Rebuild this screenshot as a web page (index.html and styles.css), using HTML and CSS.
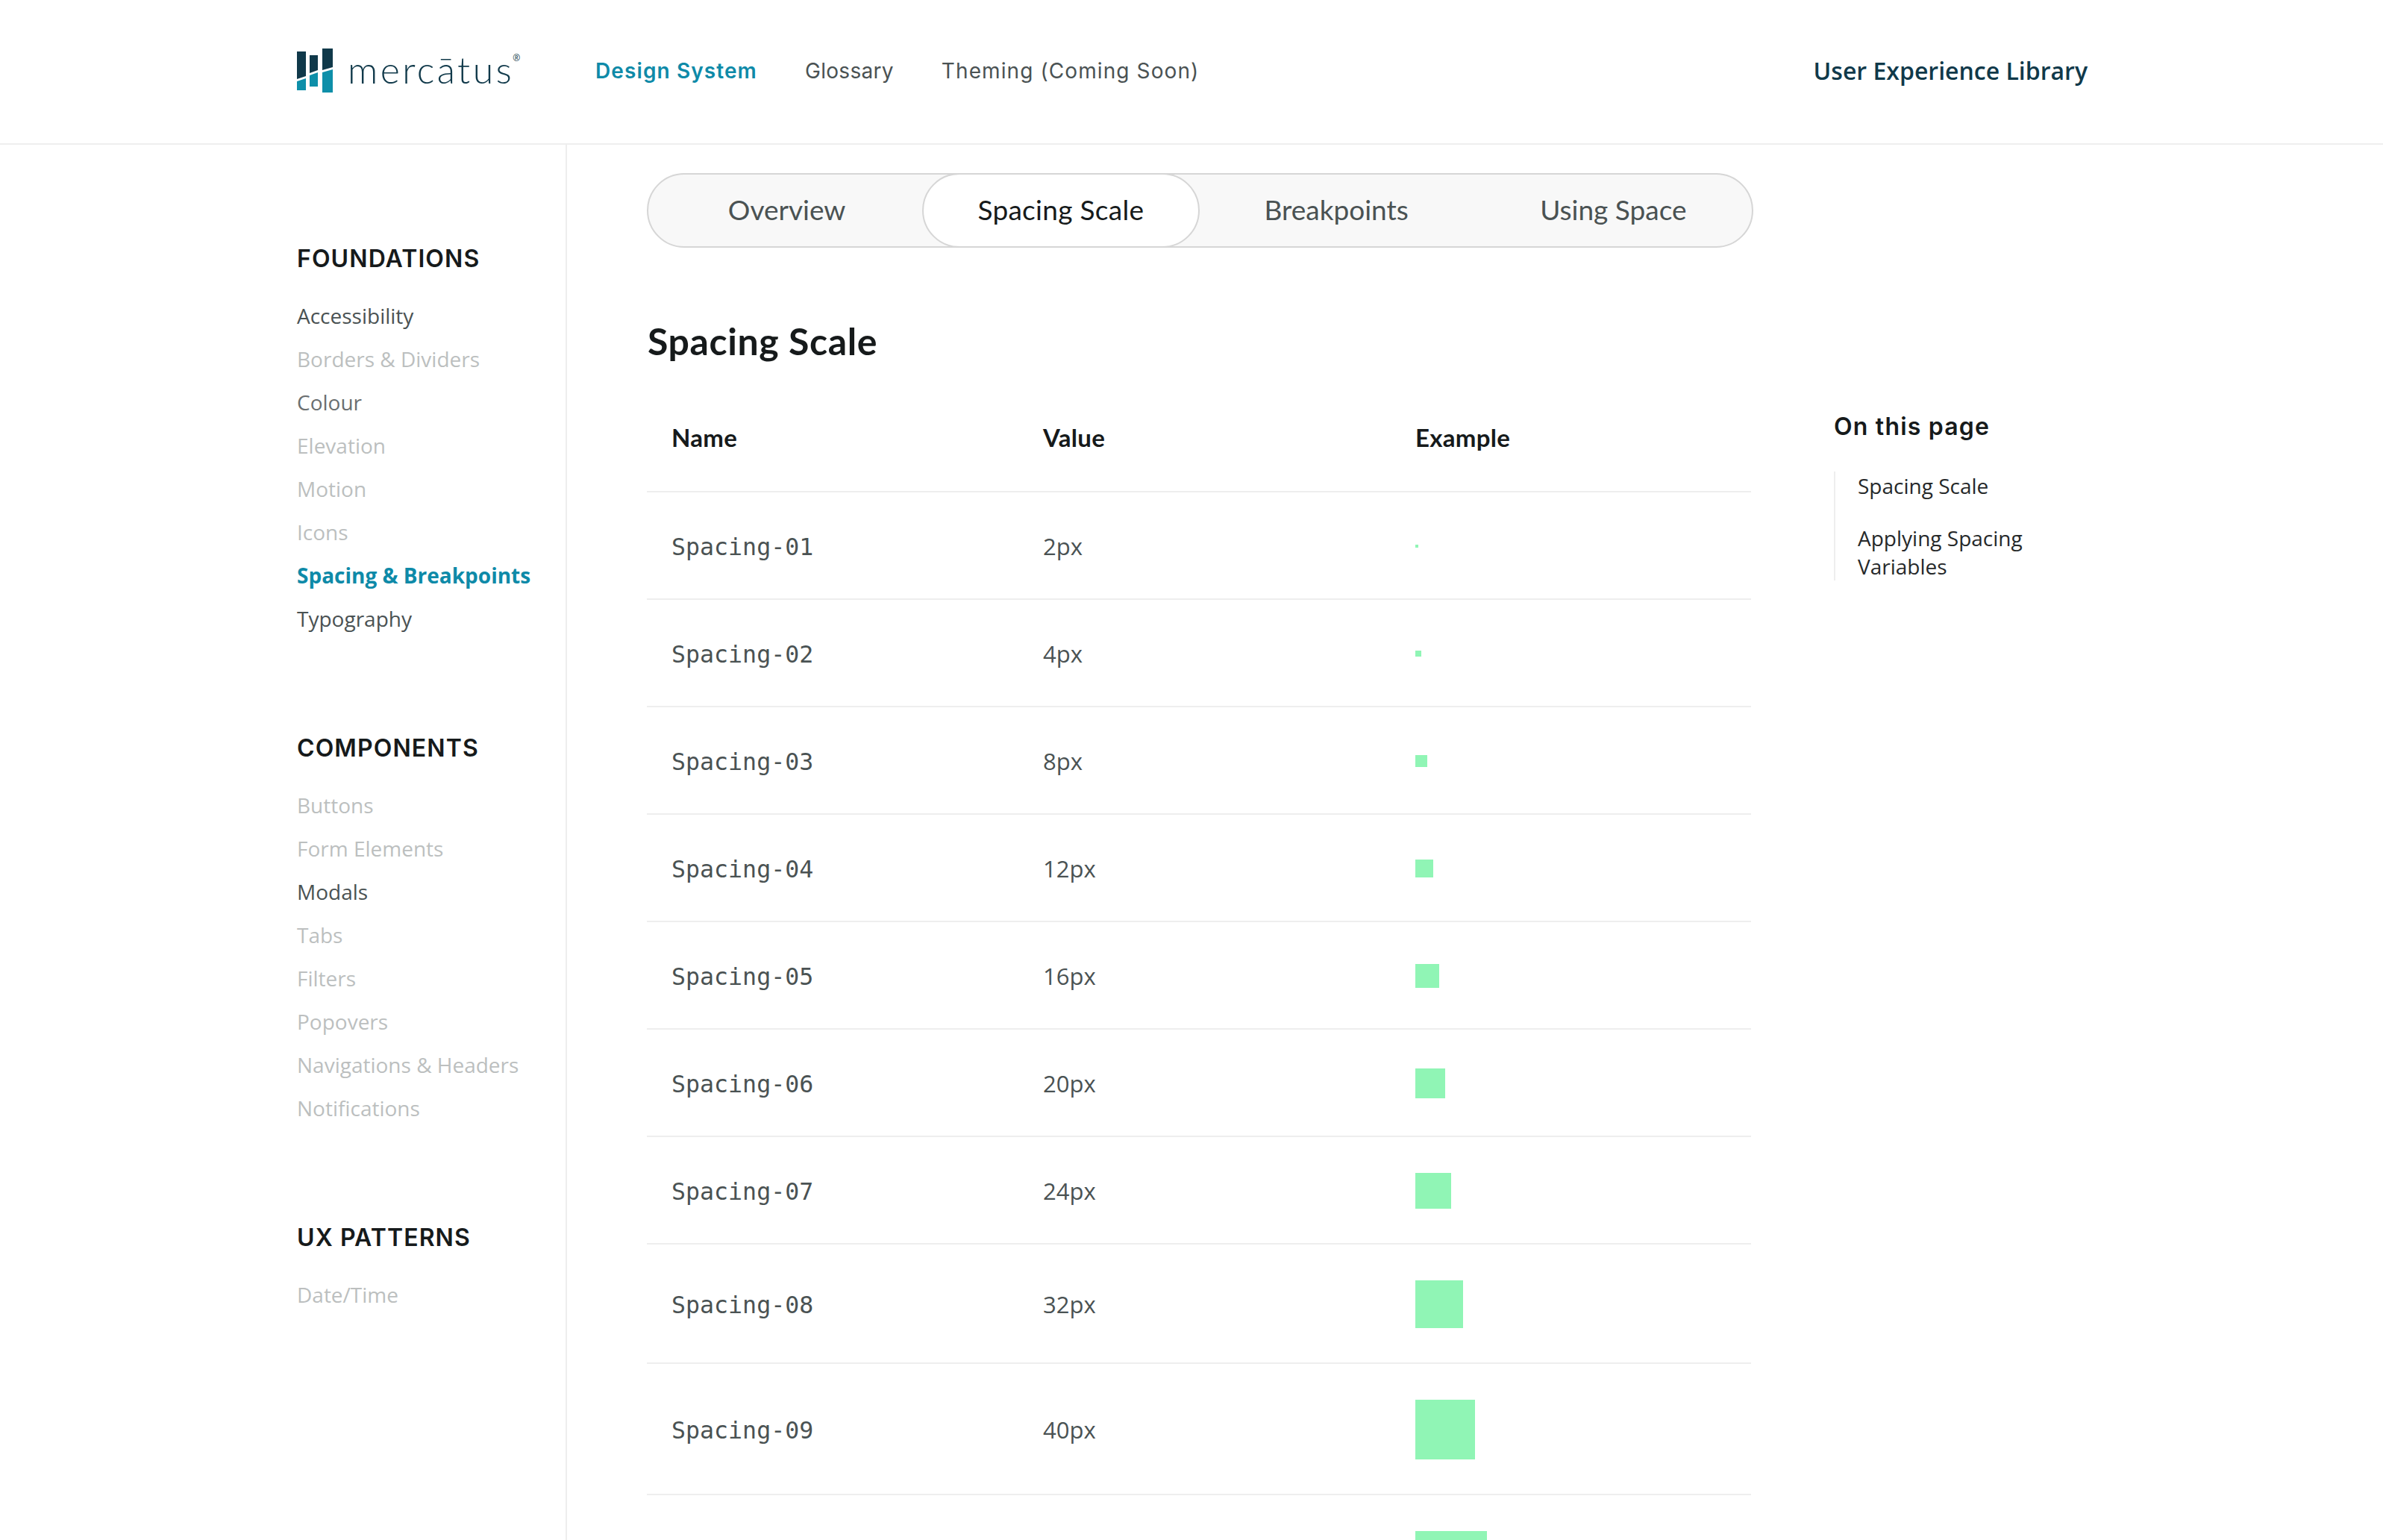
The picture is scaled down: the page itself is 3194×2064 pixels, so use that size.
FILE: index.html
```html
<!DOCTYPE html>
<html lang="en">
<head>
    <meta charset="UTF-8">
    <title>Spacing Scale - Mercatus Design System</title>
    <link rel="stylesheet" href="styles.css">
</head>
<body>
    <header class="topbar">
        <a class="logo">
            <svg class="logo-mark" viewBox="0 0 48 60" width="48" height="60">
                <polygon class="dark" points="0,4 12,4 12,37 0,41"/>
                <polygon class="dark" points="17,9 28,9 28,29 17,33"/>
                <polygon class="dark" points="34,0 48,0 48,25 34,29"/>
                <polygon class="teal" points="0,44 12,40 12,56 0,56"/>
                <polygon class="teal" points="17,36 28,32 28,51 17,51"/>
                <polygon class="teal" points="34,32 48,28 48,59 34,59"/>
            </svg>
            <span class="logo-text">mercātus</span>
            <span class="logo-reg">®</span>
        </a>
        <nav class="main-nav">
            <a class="active">Design System</a>
            <a class="short">Glossary</a>
            <a>Theming (Coming Soon)</a>
        </nav>
        <div class="library">User Experience Library</div>
    </header>

    <div class="layout">
        <aside class="sidebar">
            <section>
                <h3>FOUNDATIONS</h3>
                <ul>
                    <li>Accessibility</li>
                    <li class="off">Borders &amp; Dividers</li>
                    <li class="mid">Colour</li>
                    <li class="off">Elevation</li>
                    <li class="off">Motion</li>
                    <li class="off">Icons</li>
                    <li class="current">Spacing &amp; Breakpoints</li>
                    <li>Typography</li>
                </ul>
            </section>
            <section>
                <h3>COMPONENTS</h3>
                <ul>
                    <li class="off">Buttons</li>
                    <li class="off">Form Elements</li>
                    <li>Modals</li>
                    <li class="off">Tabs</li>
                    <li class="off">Filters</li>
                    <li class="off">Popovers</li>
                    <li class="off">Navigations &amp; Headers</li>
                    <li class="off">Notifications</li>
                </ul>
            </section>
            <section>
                <h3>UX PATTERNS</h3>
                <ul>
                    <li class="off">Date/Time</li>
                </ul>
            </section>
        </aside>

        <main class="content">
            <div class="tabs">
                <button>Overview</button>
                <button class="selected">Spacing Scale</button>
                <button>Breakpoints</button>
                <button>Using Space</button>
            </div>

            <h1>Spacing Scale</h1>

            <div class="scale">
                <div class="row head">
                    <div>Name</div>
                    <div>Value</div>
                    <div>Example</div>
                </div>
                <div class="row">
                    <div class="token">Spacing-01</div>
                    <div>2px</div>
                    <div><span class="swatch s-01"></span></div>
                </div>
                <div class="row">
                    <div class="token">Spacing-02</div>
                    <div>4px</div>
                    <div><span class="swatch s-02"></span></div>
                </div>
                <div class="row">
                    <div class="token">Spacing-03</div>
                    <div>8px</div>
                    <div><span class="swatch s-03"></span></div>
                </div>
                <div class="row">
                    <div class="token">Spacing-04</div>
                    <div>12px</div>
                    <div><span class="swatch s-04"></span></div>
                </div>
                <div class="row">
                    <div class="token">Spacing-05</div>
                    <div>16px</div>
                    <div><span class="swatch s-05"></span></div>
                </div>
                <div class="row">
                    <div class="token">Spacing-06</div>
                    <div>20px</div>
                    <div><span class="swatch s-06"></span></div>
                </div>
                <div class="row">
                    <div class="token">Spacing-07</div>
                    <div>24px</div>
                    <div><span class="swatch s-07"></span></div>
                </div>
                <div class="row">
                    <div class="token">Spacing-08</div>
                    <div>32px</div>
                    <div><span class="swatch s-08"></span></div>
                </div>
                <div class="row">
                    <div class="token">Spacing-09</div>
                    <div>40px</div>
                    <div><span class="swatch s-09"></span></div>
                </div>
                <div class="row last">
                    <div></div>
                    <div></div>
                    <div><span class="swatch s-10"></span></div>
                </div>
            </div>
        </main>

        <aside class="on-page">
            <h4>On this page</h4>
            <ul>
                <li>Spacing Scale</li>
                <li>Applying Spacing Variables</li>
            </ul>
        </aside>
    </div>
</body>
</html>
```

FILE: styles.css
```css
* {
    margin: 0;
    padding: 0;
    box-sizing: border-box;
}

html, body {
    height: 100vh;
    overflow: hidden;
}

body {
    background: #ffffff;
    color: #4a5253;
    font-family: "Open Sans", sans-serif;
}

ul {
    list-style: none;
}

/* top bar */
.topbar {
    display: flex;
    align-items: center;
    height: 194px;
    padding: 0 396px 2px 398px;
    border-bottom: 2px solid #eeeeee;
}

.logo {
    display: flex;
    align-items: center;
    width: 400px;
}

.logo-mark {
    flex-shrink: 0;
}

.logo-mark .dark {
    fill: #10394a;
}

.logo-mark .teal {
    fill: #0e8fa9;
}

.logo-text {
    margin: -4px 0 0 20px;
    font-family: Lato, sans-serif;
    font-weight: 300;
    font-size: 50px;
    letter-spacing: 3.4px;
    line-height: 60px;
    color: #10394a;
}

.logo-reg {
    align-self: flex-start;
    margin: 6px 0 0 -2px;
    font-size: 12px;
    line-height: 14px;
    color: #10394a;
}

.main-nav {
    display: flex;
    gap: 64px;
    font-family: Inter, sans-serif;
    font-size: 28px;
    letter-spacing: 1.1px;
    color: #4a5253;
}

.main-nav .active {
    color: #0e8aa8;
    font-weight: 600;
}

.main-nav .short {
    letter-spacing: 0.3px;
}

.library {
    margin: 0 0 2px auto;
    font-size: 32px;
    font-weight: 600;
    color: #10394a;
}

/* page columns */
.layout {
    display: flex;
    height: 1870px;
}

.sidebar {
    width: 760px;
    flex-shrink: 0;
    padding: 133px 0 0 398px;
    border-right: 2px solid #eeeeee;
}

.sidebar section {
    margin-bottom: 125px;
}

.sidebar h3 {
    margin-bottom: 27px;
    font-family: Inter, sans-serif;
    font-size: 32px;
    font-weight: 600;
    letter-spacing: 1.1px;
    line-height: 40px;
    color: #161a1b;
}

.sidebar li {
    font-size: 28px;
    line-height: 58px;
    color: #4a5253;
}

.sidebar li.mid {
    color: #6a6f70;
}

.sidebar li.off {
    color: #bcbfbf;
}

.sidebar li.current {
    color: #0e8aa8;
    font-weight: 700;
}

.content {
    width: 1590px;
    flex-shrink: 0;
    padding: 38px 0 0 107px;
}

/* tabs */
.tabs {
    display: flex;
    width: 1483px;
    height: 100px;
    background: #f8f8f8;
    border: 2px solid #d6d6d6;
    border-radius: 50px;
}

.tabs button {
    flex: 1;
    margin: -2px 0;
    padding-bottom: 3px;
    border: 2px solid transparent;
    border-radius: 50px;
    background: transparent;
    font-family: Lato, sans-serif;
    font-size: 37px;
    color: #4a5253;
}

.tabs .selected {
    margin: -2px -2px -2px -4px;
    background: #ffffff;
    border-color: #d6d6d6;
    letter-spacing: 0.3px;
    color: #161a1b;
}

h1 {
    margin-top: 89px;
    padding-left: 1px;
    font-family: Lato, sans-serif;
    font-size: 50px;
    font-weight: 700;
    letter-spacing: 0.6px;
    line-height: 72px;
    color: #161a1b;
}

/* scale table */
.scale {
    width: 1480px;
    margin-top: 21px;
    font-size: 31px;
}

.row {
    display: grid;
    grid-template-columns: 498px 499px 1fr;
    align-items: center;
    padding: 48px 0 46px 33px;
    border-bottom: 2px solid #eeeeee;
    line-height: 48px;
    color: #4a5253;
}

.row.head {
    padding-bottom: 48px;
    font-family: Lato, sans-serif;
    font-size: 33px;
    font-weight: 700;
    letter-spacing: 0.3px;
    color: #161a1b;
}

.row.last {
    border-bottom: none;
}

.token {
    height: 48px;
    font-family: "DejaVu Sans Mono", monospace;
    font-size: 31.6px;
    line-height: 50px;
}

.swatch {
    display: block;
    background: #90f5b5;
}

.s-01 { width: 4px; height: 4px; }
.s-02 { width: 8px; height: 8px; }
.s-03 { width: 16px; height: 16px; }
.s-04 { width: 24px; height: 24px; }
.s-05 { width: 32px; height: 32px; }
.s-06 { width: 40px; height: 40px; }
.s-07 { width: 48px; height: 48px; }
.s-08 { width: 64px; height: 64px; }
.s-09 { width: 80px; height: 80px; }
.s-10 { width: 96px; height: 96px; }

/* right rail */
.on-page {
    width: 360px;
    padding: 354px 0 0 108px;
    flex-shrink: 0;
    box-sizing: content-box;
}

.on-page h4 {
    margin-bottom: 36px;
    font-family: Inter, sans-serif;
    font-size: 32px;
    font-weight: 600;
    letter-spacing: 1.2px;
    line-height: 48px;
    color: #161a1b;
}

.on-page ul {
    width: 280px;
    padding-left: 30px;
    border-left: 2px solid #eeeeee;
    font-size: 28px;
    line-height: 38px;
    color: #26292a;
}

.on-page li + li {
    margin-top: 32px;
}
```
